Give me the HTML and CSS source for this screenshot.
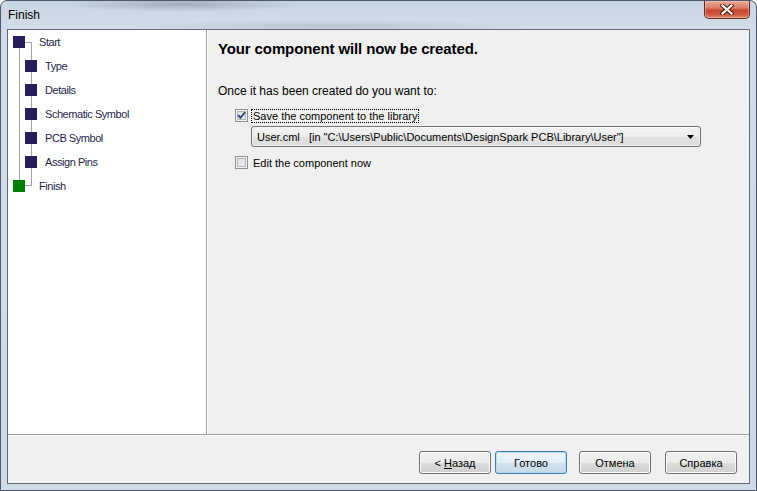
FILE: index.html
```html
<!DOCTYPE html>
<html>
<head>
<meta charset="utf-8">
<title>Finish</title>
<link rel="stylesheet" href="styles.css">
</head>
<body>
<div class="window">
  <div class="titlebar">
    <span class="title">Finish</span>
    <div class="close">
      <svg width="14" height="11" viewBox="0 0 14 11">
        <path d="M2.5 1.5 L11.5 9.5 M11.5 1.5 L2.5 9.5" stroke="#4a1a12" stroke-width="4.2" stroke-linecap="square" fill="none"/>
        <path d="M2.5 1.5 L11.5 9.5 M11.5 1.5 L2.5 9.5" stroke="#ffffff" stroke-width="2.2" stroke-linecap="square" fill="none"/>
      </svg>
    </div>
  </div>
  <div class="client">
    <div class="main">
      <div class="tree">
        <svg class="connectors" width="40" height="170" viewBox="0 0 40 170">
          <path d="M11.5 18 V150 M23.5 12 V156 M17 12.5 H24 M17 155.5 H24" stroke="#a0a0a0" stroke-width="1" fill="none"/>
        </svg>
        <div class="node top"><span class="sq"></span><span class="lbl">Start</span></div>
        <div class="node child"><span class="sq"></span><span class="lbl">Type</span></div>
        <div class="node child"><span class="sq"></span><span class="lbl">Details</span></div>
        <div class="node child"><span class="sq"></span><span class="lbl">Schematic Symbol</span></div>
        <div class="node child"><span class="sq"></span><span class="lbl">PCB Symbol</span></div>
        <div class="node child"><span class="sq"></span><span class="lbl">Assign Pins</span></div>
        <div class="node top"><span class="sq green"></span><span class="lbl">Finish</span></div>
      </div>
      <div class="content">
        <h1 class="heading">Your component will now be created.</h1>
        <p class="question">Once it has been created do you want to:</p>
        <div class="check-row">
          <span class="checkbox">
            <svg width="13" height="13" viewBox="0 0 13 13">
              <rect x="0.5" y="0.5" width="12" height="12" fill="#f5f5f5" stroke="#8e8f8f"/>
              <rect x="2.5" y="2.5" width="8" height="8" fill="#e4e6ea" stroke="#b2b6bc"/>
              <path d="M3.2 6.2 L5.4 8.8 L10 3.2" stroke="#2c3f7a" stroke-width="1.8" fill="none"/>
            </svg>
          </span>
          <span class="label focus">Save the component to the library</span>
        </div>
        <div class="combo">
          <span class="combo-text">User.cml&nbsp;&nbsp;&nbsp;[in "C:\Users\Public\Documents\DesignSpark PCB\Library\User"]</span>
          <svg class="arrow" width="7" height="4" viewBox="0 0 7 4"><path d="M0 0 H7 L3.5 4 Z" fill="#000"/></svg>
        </div>
        <div class="check-row second">
          <span class="checkbox">
            <svg width="13" height="13" viewBox="0 0 13 13">
              <rect x="0.5" y="0.5" width="12" height="12" fill="#f5f5f5" stroke="#8e8f8f"/>
              <rect x="2.5" y="2.5" width="8" height="8" fill="#e4e6ea" stroke="#b2b6bc"/>
            </svg>
          </span>
          <span class="label">Edit the component now</span>
        </div>
      </div>
    </div>
    <div class="footer">
      <button class="btn"><span>&lt; <u>Н</u>азад</span></button>
      <button class="btn default gap-s">Готово</button>
      <button class="btn gap-m">Отмена</button>
      <button class="btn gap-l">Справка</button>
    </div>
  </div>
</div>
</body>
</html>
```

FILE: styles.css
```css
* { box-sizing: border-box; }
html, body { margin: 0; padding: 0; }
body {
  width: 757px;
  height: 491px;
  overflow: hidden;
  font-family: "Liberation Sans", Arial, sans-serif;
  background: #ffffff;
}
.window {
  width: 757px;
  height: 491px;
  border: 1px solid #4e5a68;
  border-radius: 7px 7px 0 0;
  padding: 0 6px 6px 6px;
  display: flex;
  flex-direction: column;
  background:
    radial-gradient(ellipse 120px 8px at 180px 3px, rgba(90,100,115,0.35), rgba(90,100,115,0) 100%),
    radial-gradient(ellipse 200px 6px at 330px 25px, rgba(120,130,140,0.25), rgba(120,130,140,0) 100%),
    linear-gradient(180deg, #c8d5e3 0%, #d3dde8 6%, #cfdae6 100%);
}
.titlebar {
  height: 28px;
  display: flex;
  justify-content: space-between;
  align-items: flex-start;
  flex: none;
}
.title {
  font-size: 12px;
  color: #000;
  padding-left: 1px;
  line-height: 28px;
}
.close {
  width: 46px;
  height: 18px;
  border: 1px solid #5e2a22;
  border-top: none;
  border-radius: 0 0 5px 5px;
  background: linear-gradient(180deg, #e9a997 0%, #dc7f68 40%, #c7432a 55%, #cf5a3f 80%, #e08a6c 100%);
  box-shadow: inset 0 0 0 1px rgba(255,210,200,0.45);
  display: flex;
  align-items: center;
  justify-content: center;
}
.close svg { display: block; }
.client {
  flex: 1;
  border: 1px solid #5f6b78;
  display: flex;
  flex-direction: column;
  background: #f0f0f0;
}
.main {
  height: 405px;
  display: flex;
  border-bottom: 1px solid #a0a0a0;
  box-shadow: 0 1px 0 #ffffff;
  flex: none;
}
.tree {
  position: relative;
  width: 199px;
  background: #ffffff;
  border-right: 1px solid #a0a0a0;
  flex: none;
}
.connectors {
  position: absolute;
  left: 0;
  top: 0;
}
.node {
  height: 24px;
  display: flex;
  align-items: center;
  font-size: 11px;
  letter-spacing: -0.45px;
  color: #1f1f4e;
  position: relative;
}
.sq {
  width: 12px;
  height: 12px;
  background: #291c5c;
  flex: none;
}
.sq.green { background: #008000; }
.node.top { padding-left: 5px; }
.node.top .lbl { margin-left: 14px; }
.node.child { padding-left: 17px; }
.node.child .lbl { margin-left: 8px; }
.content {
  flex: 1;
  border-left: 1px solid #ffffff;
  padding: 10px 0 0 10px;
  background: #f0f0f0;
}
.heading {
  margin: 0;
  font-size: 15px;
  line-height: 18px;
  letter-spacing: -0.12px;
  font-weight: bold;
  color: #000;
}
.question {
  margin: 26px 0 0 0;
  font-size: 12px;
  line-height: 14px;
  color: #000;
}
.check-row {
  margin: 10px 0 0 17px;
  height: 15px;
  display: flex;
  align-items: center;
  font-size: 11px;
  color: #000;
}
.check-row.second { margin-top: 8px; }
.checkbox {
  width: 13px;
  height: 13px;
  flex: none;
}
.checkbox svg { display: block; }
.label {
  margin-left: 3px;
  padding: 0 1px;
  line-height: 12px;
  border: 1px solid transparent;
}
.label.focus { border: 1px dotted #000; }
.combo {
  margin: 3px 0 0 33px;
  width: 450px;
  height: 21px;
  border: 1px solid #707070;
  border-radius: 3px;
  background: linear-gradient(180deg, #f3f3f3 0%, #ececec 50%, #e2e2e2 50%, #dcdcdc 100%);
  box-shadow: inset 0 0 0 1px rgba(255,255,255,0.6);
  display: flex;
  align-items: center;
  justify-content: space-between;
  padding: 0 6px 0 5px;
  font-size: 11px;
  color: #000;
}
.combo-text { white-space: pre; }
.arrow { display: block; flex: none; }
.footer {
  flex: 1;
  display: flex;
  justify-content: flex-end;
  align-items: flex-start;
  padding: 15px 12px 0 0;
  margin-top: 1px;
}
.btn {
  width: 72px;
  height: 23px;
  margin: 0;
  padding: 0;
  font-family: "Liberation Sans", Arial, sans-serif;
  font-size: 11px;
  color: #000;
  border: 1px solid #707070;
  border-radius: 3px;
  background: linear-gradient(180deg, #f2f2f2 0%, #ebebeb 50%, #dddddd 50%, #cfcfcf 100%);
  box-shadow: inset 0 0 0 1px #fbfbfb;
}
.btn u { text-decoration: underline; }
.btn.default {
  border-color: #3c7fb1;
  background: linear-gradient(180deg, #eef5fa 0%, #e3edf5 50%, #d3e2ee 50%, #c6d9e8 100%);
  box-shadow: inset 0 0 0 1px #b6dcf3;
}
.gap-s { margin-left: 4px; }
.gap-m { margin-left: 12px; }
.gap-l { margin-left: 14px; }
```
